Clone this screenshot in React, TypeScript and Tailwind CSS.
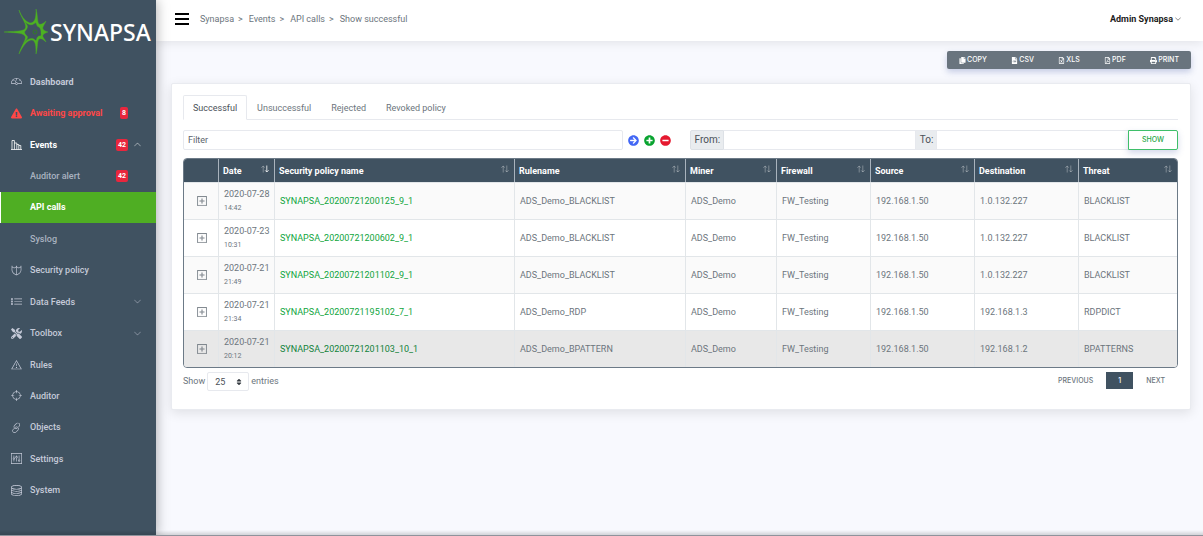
import React from "react";
import {
  TfiAlert,
  TfiAngleDown,
  TfiAngleUp,
  TfiDashboard,
  TfiLink,
  TfiList,
  TfiPanel,
  TfiServer,
  TfiShield,
  TfiTarget,
} from "react-icons/tfi";
import {
  FaArrowCircleRight,
  FaCopy,
  FaExclamationTriangle,
  FaFileCsv,
  FaMinusCircle,
  FaPlusCircle,
  FaPrint,
  FaRegFileExcel,
  FaRegFilePdf,
  FaSort,
  FaTools,
} from "react-icons/fa";
import { BsPlusSquare } from "react-icons/bs";

function EventsIcon({ className }: { className?: string }) {
  return (
    <svg className={className} viewBox="0 0 11 11" fill="none" stroke="currentColor" strokeWidth="0.8">
      <path d="M0 10.5 H11 M1 10.5 V1.5 H3.4 V10.5 M3.4 4 H5.8 V10.5 M5.8 5.5 H7.8 V10.5 M7.8 6.5 H9.8 V10.5" />
    </svg>
  );
}

const menu = [
  { label: "Dashboard", icon: TfiDashboard, style: "font-bold text-[#c5cad8]" },
  { label: "Awaiting approval", icon: FaExclamationTriangle, style: "font-bold text-[#ff4747]", badge: 8 },
  { label: "Events", icon: EventsIcon, style: "font-bold text-white", badge: 42, arrow: "up" },
  { label: "Auditor alert", style: "font-medium text-[#aab2c0]", badge: 42 },
  { label: "API calls", style: "font-bold text-white", active: true },
  { label: "Syslog", style: "font-medium text-[#aab2c0]" },
  { label: "Security policy", icon: TfiShield, style: "font-medium text-[#c5cad8]" },
  { label: "Data Feeds", icon: TfiList, style: "font-medium text-[#c5cad8]", arrow: "down" },
  { label: "Toolbox", icon: FaTools, style: "font-medium text-[#c5cad8]", arrow: "down" },
  { label: "Rules", icon: TfiAlert, style: "font-medium text-[#c5cad8]" },
  { label: "Auditor", icon: TfiTarget, style: "font-medium text-[#c5cad8]" },
  { label: "Objects", icon: TfiLink, style: "font-medium text-[#c5cad8]" },
  { label: "Settings", icon: TfiPanel, style: "font-medium text-[#c5cad8]" },
  { label: "System", icon: TfiServer, style: "font-medium text-[#c5cad8]" },
];

const exportButtons = [
  { label: "COPY", icon: FaCopy },
  { label: "CSV", icon: FaFileCsv },
  { label: "XLS", icon: FaRegFileExcel },
  { label: "PDF", icon: FaRegFilePdf },
  { label: "PRINT", icon: FaPrint },
];

const tabs = ["Successful", "Unsuccessful", "Rejected", "Revoked policy"];

const columns = [
  { name: "", width: 34 },
  { name: "Date", width: 56 },
  { name: "Security policy name", width: 240 },
  { name: "Rulename", width: 171 },
  { name: "Miner", width: 91 },
  { name: "Firewall", width: 94 },
  { name: "Source", width: 104 },
  { name: "Destination", width: 104 },
  { name: "Threat", width: 99 },
];

const rows = [
  { date: "2020-07-28", time: "14:42", policy: "SYNAPSA_20200721200125_9_1", rule: "ADS_Demo_BLACKLIST", destination: "1.0.132.227", threat: "BLACKLIST" },
  { date: "2020-07-23", time: "10:31", policy: "SYNAPSA_20200721200602_9_1", rule: "ADS_Demo_BLACKLIST", destination: "1.0.132.227", threat: "BLACKLIST" },
  { date: "2020-07-21", time: "21:49", policy: "SYNAPSA_20200721201102_9_1", rule: "ADS_Demo_BLACKLIST", destination: "1.0.132.227", threat: "BLACKLIST" },
  { date: "2020-07-21", time: "21:34", policy: "SYNAPSA_20200721195102_7_1", rule: "ADS_Demo_RDP", destination: "192.168.1.3", threat: "RDPDICT" },
  { date: "2020-07-21", time: "20:12", policy: "SYNAPSA_20200721201103_10_1", rule: "ADS_Demo_BPATTERN", destination: "192.168.1.2", threat: "BPATTERNS", hover: true },
];

function Logo() {
  return (
    <a href="#" className="flex h-[66px] items-center pb-[2px] pl-1">
      <svg className="h-[46px] w-[44px] shrink-0" viewBox="0 0 44 46" fill="#4db222">
        <path
          fillRule="evenodd"
          stroke="#4db222"
          strokeWidth="0.4"
          d="M15 1 C18 9 23 14 27 14 C32 13 32 6 32 0 C34 7 33 13 35 15 C37 16 40 14 42 12 C41 15 38 18 39 20 C40 22 42 22 44 23 C42 24 40 24 39 26 C38 28 41 30 42 33 C39 30 37 29 35 30 C33 32 34 38 32 45 C32 38 32 32 28 31 C23 31 19 37 15 45 C17 37 23 30 21 27 C18 23 9 24 0 23 C9 22 17 23 21 20 C24 16 17 9 15 1 Z
          M20 12 C23 16 25 17 22 21 C20 23 20 24 23 27 C25 29 21 32 20 34 C23 30 28 28 31 31 C33 33 32 28 35 27 C38 27 37 26 37 24 C37 22 37 20 35 18 C32 18 33 13 31 14 C28 17 24 16 20 12 Z"
        />
        <circle cx="31" cy="23" r="2" fill="none" stroke="#347b28" />
      </svg>
      <span className="ml-[2px] font-['Noto_Sans',sans-serif] text-[23px] font-medium leading-6 text-white">SYNAPSA</span>
    </a>
  );
}

function Sidebar() {
  return (
    <aside className="relative z-20 w-[156px] shrink-0 bg-[#405261] shadow-[0_0_12px_rgba(0,0,0,0.35)]">
      <Logo />
      <nav className="grid h-[440px] auto-rows-fr">
        {menu.map((item) => (
          <a
            key={item.label}
            href="#"
            className={`flex items-center border-l pl-[10px] pr-[15px] ${item.style} ${
              item.active ? "border-white bg-[#4fae23]" : "border-transparent"
            }`}
          >
            <span className="w-[19px] shrink-0">{item.icon && <item.icon className="h-[11px] w-[11px]" />}</span>
            <span className="whitespace-nowrap">{item.label}</span>
            {item.badge && (
              <span
                className={`ml-auto rounded-xs bg-[#e9263d] px-[2px] py-[2px] text-[7px] font-bold leading-2 text-white ${
                  item.arrow ? "mr-[6px]" : "mr-[13px]"
                }`}
              >
                {item.badge}
              </span>
            )}
            {item.arrow === "up" && <TfiAngleUp className="h-[7px] w-[7px]" />}
            {item.arrow === "down" && <TfiAngleDown className="ml-auto h-[7px] w-[7px]" />}
          </a>
        ))}
      </nav>
    </aside>
  );
}

function Header() {
  return (
    <header className="relative z-10 flex h-[41px] items-center bg-white pb-1 pl-[19px] pr-[22px] shadow-[0_2px_10px_rgba(0,0,0,0.09)]">
      <button aria-label="Toggle menu" className="flex w-[14px] flex-col gap-[2px]">
        <span className="h-[2px] w-full bg-black" />
        <span className="my-px h-[2px] w-full bg-black" />
        <span className="h-[2px] w-full bg-black" />
      </button>
      <div className="ml-[11px] flex gap-1">
        <a href="#">Synapsa</a>
        <span>&gt;</span>
        <a href="#" className="ml-[2px]">Events</a>
        <span>&gt;</span>
        <a href="#" className="ml-[2px]">API calls</a>
        <span>&gt;</span>
        <span className="ml-[2px]">Show successful</span>
      </div>
      <button className="ml-auto flex items-center gap-[2px] font-bold text-[#1c1c1c]">
        Admin Synapsa
        <TfiAngleDown className="h-[6px] w-[6px]" />
      </button>
    </header>
  );
}

function SortIcon({ active }: { active?: boolean }) {
  return (
    <svg className="h-2 w-2 shrink-0" viewBox="0 0 8 8" fill="none" stroke="#fff" strokeWidth="0.8">
      <path d="M2.2 7.5 V1 M0.4 2.8 L2.2 1 L3.8 2.6" strokeOpacity={active ? 0.4 : 0.4} />
      <path d="M5.8 0.5 V7 M4.2 5.4 L5.8 7 L7.6 5.2" strokeOpacity={active ? 1 : 0.4} />
    </svg>
  );
}

function Filters() {
  return (
    <form className="mt-[10px] flex h-5 items-center">
      <input
        aria-label="Filter"
        placeholder="Filter"
        className="h-5 w-[439px] shrink grow rounded-xs border border-[#e7e9ee] px-1 text-[#5b636b] placeholder:text-[#5b636b]"
      />
      <div className="ml-[5px] flex gap-[5px]">
        <button type="button" aria-label="Apply filter"><FaArrowCircleRight className="h-[11px] w-[11px] text-[#4267f5]" /></button>
        <button type="button" aria-label="Add filter"><FaPlusCircle className="h-[11px] w-[11px] text-[#08a32f]" /></button>
        <button type="button" aria-label="Remove filter"><FaMinusCircle className="h-[11px] w-[11px] text-[#e5192f]" /></button>
      </div>
      <div className="ml-[19px] flex h-5 w-[488px] shrink grow text-[10px] text-[#495057]">
        <label htmlFor="from" className="flex items-center rounded-l-xs border border-[#dde1e6] bg-[#e9ecef] pl-1 pr-[3px]">From:</label>
        <input id="from" className="w-0 grow border-y border-[#e7e9ee]" />
        <label htmlFor="to" className="flex items-center border border-[#e7e9ee] bg-[#e9ecef] pl-1 pr-[3px]">To:</label>
        <input id="to" className="w-0 grow border-y border-[#e7e9ee]" />
        <button
          type="button"
          className="w-[50px] rounded-r-xs border border-[#3fbf6a] bg-white font-['Inter',sans-serif] text-[7px] font-medium text-[#28a745] shadow-[0_3px_6px_rgba(80,100,170,0.25)]"
        >
          SHOW
        </button>
      </div>
    </form>
  );
}

function EventsTable() {
  return (
    <div className="mt-2 overflow-hidden rounded-sm border border-[#6c7a87]">
      <table className="w-full table-fixed border-separate border-spacing-0 text-left">
        <colgroup>
          {columns.map((col, i) => (
            <col key={i} style={{ width: col.width }} />
          ))}
        </colgroup>
        <thead className="bg-[#405261] text-white">
          <tr className="h-[23px]">
            {columns.map((col, i) => (
              <th key={i} className="border-l border-[#a9b3bd] py-0 pl-1 pr-[5px] first:border-l-0">
                {col.name && (
                  <div className="flex items-center justify-between">
                    {col.name}
                    <span className="pb-1"><SortIcon active={col.name === "Date"} /></span>
                  </div>
                )}
              </th>
            ))}
          </tr>
        </thead>
        <tbody>
          {rows.map((row) => (
            <tr
              key={row.policy}
              className={`h-[37px] whitespace-nowrap [&>td]:border-l [&>td]:border-t [&>td]:border-[#e2e6e9] [&>td]:py-0 [&>td]:pl-[5px] [&>td]:pr-1 [&>td:first-child]:border-l-0 ${
                row.hover ? "bg-[#e8e8e8]" : "odd:bg-[#fafafa]"
              }`}
            >
              <td>
                <button aria-label="Show details" className="mx-auto block"><BsPlusSquare className="h-[10px] w-[10px]" strokeWidth="0.4" /></button>
              </td>
              <td>
                <div>{row.date}</div>
                <div className="pt-[2px] text-[7px]">{row.time}</div>
              </td>
              <td>
                <a href="#" className={row.hover ? "text-[#11823a]" : "text-[#0fa53c]"}>{row.policy}</a>
              </td>
              <td>{row.rule}</td>
              <td>ADS_Demo</td>
              <td>FW_Testing</td>
              <td>192.168.1.50</td>
              <td>{row.destination}</td>
              <td>{row.threat}</td>
            </tr>
          ))}
        </tbody>
      </table>
    </div>
  );
}

function TableFooter() {
  return (
    <div className="mt-1 flex items-start justify-between">
      <label className="flex gap-[2px]">
        <span className="pt-[3px]">Show</span>
        <span className="relative">
          <select className="h-[19px] w-[42px] appearance-none rounded-xs border border-[#e7e9ee] bg-white pl-[7px] pt-px text-[#495057]">
            <option>25</option>
            <option>50</option>
            <option>100</option>
          </select>
          <FaSort className="pointer-events-none absolute right-[6px] top-[6px] h-2 w-2 text-[#343a40]" />
        </span>
        <span className="pt-[3px]">entries</span>
      </label>
      <div className="flex h-[17px] items-center font-['Inter',sans-serif] text-[7px] font-medium">
        <button>PREVIOUS</button>
        <button className="mx-[13px] h-[17px] w-[27px] bg-[#405261] text-white">1</button>
        <button className="mr-[13px]">NEXT</button>
      </div>
    </div>
  );
}

export default function App() {
  return (
    <div className="flex min-h-screen bg-[#f8f9fe] font-['Roboto',sans-serif] text-[9px] leading-3 text-[#6c757d]">
      <Sidebar />
      <div className="min-w-0 flex-1">
        <Header />
        <main className="pb-6 pl-[15px] pr-3 pt-[10px]">
          <div className="flex justify-end">
            <div className="flex h-[18px] w-[244px] justify-between rounded-xs bg-[#69747e] px-3 font-['Inter',sans-serif] text-[7px] font-medium text-white shadow-[0_3px_6px_rgba(80,100,170,0.3)]">
              {exportButtons.map((btn) => (
                <button key={btn.label} className="flex items-center gap-px">
                  <btn.icon className="h-[7px] w-[7px]" />
                  {btn.label}
                </button>
              ))}
            </div>
          </div>

          <section className="mt-[14px] rounded-xs border border-[#e9ebf0] bg-white pb-[18px] pl-[11px] pr-3 pt-[11px] shadow-[0_3px_12px_rgba(0,0,0,0.1)]">
            {/* Tabs */}
            <div role="tablist" className="flex border-b border-[#e7e9ee]">
              {tabs.map((tab, i) => (
                <button
                  key={tab}
                  role="tab"
                  aria-selected={i === 0}
                  className={`-mb-px h-[25px] rounded-t-xs border px-[9px] ${
                    i === 0 ? "border-[#e7e9ee] border-b-white bg-white text-[#495057]" : "border-transparent"
                  }`}
                >
                  {tab}
                </button>
              ))}
            </div>
            <Filters />
            <EventsTable />
            <TableFooter />
          </section>
        </main>
      </div>
      <div className="pointer-events-none fixed inset-x-0 bottom-0 z-30 h-[6px] border-b border-[#8f939c] bg-linear-to-b from-transparent to-black/15" />
    </div>
  );
}
